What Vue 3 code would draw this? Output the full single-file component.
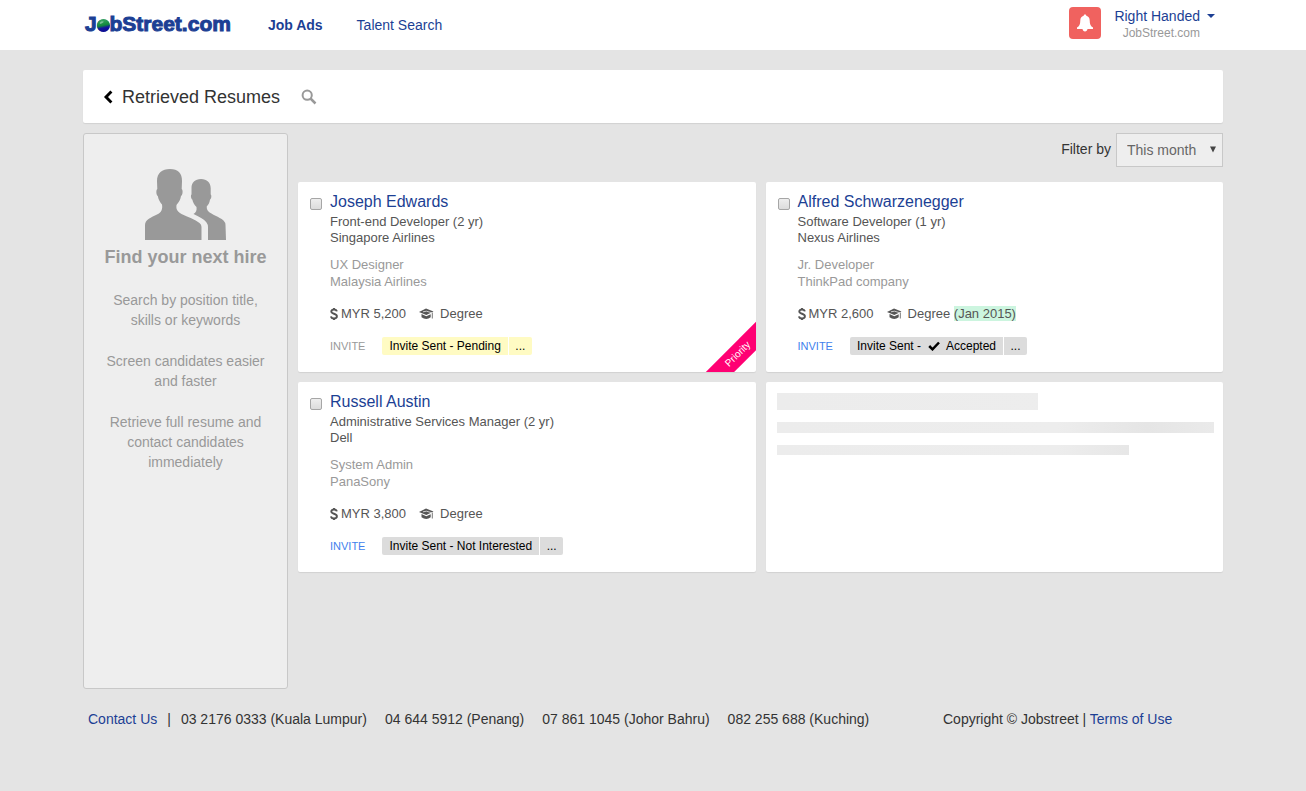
<script setup>
import { ref } from 'vue'

const period = ref('This month')

const candidates = ref([
  {
    id: 1, name: 'Joseph Edwards', role: 'Front-end Developer (2 yr)', company: 'Singapore Airlines',
    pastRole: 'UX Designer', pastCompany: 'Malaysia Airlines', salary: 'MYR 5,200', graduated: '',
    canInvite: false, prefix: 'Invite Sent - Pending', accepted: false, tone: 'pending', priority: true, checked: false
  },
  {
    id: 2, name: 'Alfred Schwarzenegger', role: 'Software Developer (1 yr)', company: 'Nexus Airlines',
    pastRole: 'Jr. Developer', pastCompany: 'ThinkPad company', salary: 'MYR 2,600', graduated: '(Jan 2015)',
    canInvite: true, prefix: 'Invite Sent -', accepted: true, tone: 'closed', priority: false, checked: false
  },
  {
    id: 3, name: 'Russell Austin', role: 'Administrative Services Manager (2 yr)', company: 'Dell',
    pastRole: 'System Admin', pastCompany: 'PanaSony', salary: 'MYR 3,800', graduated: '',
    canInvite: true, prefix: 'Invite Sent - Not Interested', accepted: false, tone: 'closed', priority: false, checked: false
  }
])

const phones = [
  '03 2176 0333 (Kuala Lumpur)',
  '04 644 5912 (Penang)',
  '07 861 1045 (Johor Bahru)',
  '082 255 688 (Kuching)'
]
</script>

<template>
  <div class="page">
    <header class="topbar">
      <div class="container topbar-inner">
        <a class="logo" href="#">J<span class="logo-o">o<svg class="globe" viewBox="0 0 14 14" aria-hidden="true">
          <defs>
            <linearGradient id="globeFill" x1="0.3" y1="0" x2="0.5" y2="1">
              <stop offset="0" stop-color="#3fa968" />
              <stop offset="0.5" stop-color="#128a3c" />
              <stop offset="0.7" stop-color="#1414a0" />
              <stop offset="1" stop-color="#0c0c90" />
            </linearGradient>
          </defs>
          <circle cx="7" cy="7" r="7" fill="url(#globeFill)" />
          <path d="M3 4 Q5 1.500 7.500 3 Q5.500 5 3.200 5.400Z" fill="#7cc198" />
        </svg></span>bStreet.com</a>
        <nav class="nav">
          <a class="nav-link active" href="#">Job Ads</a>
          <a class="nav-link" href="#">Talent Search</a>
        </nav>
        <div class="account">
          <button class="bell" type="button" aria-label="Notifications">
            <svg width="18" height="18" viewBox="0 0 18 18" aria-hidden="true">
              <path d="M9 .5c.8 0 1.300.5 1.300 1.300 2.400.6 3.400 2.400 3.400 4.600 0 4 1 5.600 3.300 7.100v1.500H1v-1.500c2.300-1.500 3.300-3.100 3.300-7.100 0-2.200 1-4 3.400-4.600C7.700 1 8.200.5 9 .5z" fill="#fff" />
              <path d="M6.500 15h5c-.2 1.400-1.200 2.400-2.500 2.400S6.700 16.400 6.500 15z" fill="#fff" />
            </svg>
          </button>
          <div class="who">
            <button class="user" type="button">Right Handed<span class="caret"></span></button>
            <span class="org">JobStreet.com</span>
          </div>
        </div>
      </div>
    </header>

    <main class="container">
      <div class="titlebar">
        <a class="back" href="#" aria-label="Back">
          <svg width="10" height="14" viewBox="0 0 10 14" aria-hidden="true">
            <path d="M8.400 1.500 3 7l5.400 5.500" fill="none" stroke="#000" stroke-width="2.900" />
          </svg>
        </a>
        <h1>Retrieved Resumes</h1>
        <button class="search" type="button" aria-label="Search">
          <svg width="16" height="16" viewBox="0 0 16 16" aria-hidden="true">
            <circle cx="6.200" cy="6.200" r="4.600" fill="none" stroke="#999" stroke-width="2" />
            <path d="M9.500 9.500 14.500 14.500" stroke="#999" stroke-width="2.500" />
          </svg>
        </button>
      </div>

      <div class="columns">
        <aside class="promo">
          <svg class="people" width="82" height="71" viewBox="0 0 82 71" aria-hidden="true">
            <path fill="#999" d="M25 0C17 0 12 4 12 12L12.300 20C11 20.500 11 26 12.800 27C13.500 31 15 33 17 35.500C17.800 40 16.500 43.500 12 45.500C8 47.500 3 49.500 1 52.500Q0 54 0 56V71H56.500V58Q56.500 55.500 54.500 54C50 50.500 43 48 36.500 45C32 42.500 31 40 31.500 36C34 33 35.500 30.500 36 27C38 26 38 20.500 36.700 20L37 12C37 4 33 0 25 0Z" />
            <path fill="#999" d="M56 10C50 10 46.500 13.500 46.500 19V25.500C45.500 26 46 30 47.300 30.500C48 34 49.500 36 51.500 38C52 41.500 51 43.500 48.500 45C54 48 59 50 61.500 53.500Q63 55.500 63 58V71H81L80.500 56Q80.500 53.500 78.500 51.500C74 47.500 67 46 63 42Q61.500 40 61.700 37.500C63.500 35.500 64.700 33.500 65 30.500C66.500 30 66.800 26 65.700 25.500V19C65.500 13.500 62 10 56 10Z" />
          </svg>
          <h2>Find your next hire</h2>
          <p>Search by position title, skills or keywords</p>
          <p>Screen candidates easier and faster</p>
          <p>Retrieve full resume and contact candidates immediately</p>
        </aside>

        <section class="results">
          <div class="filter">
            <label for="period">Filter by</label>
            <span class="select-wrap">
              <select id="period" v-model="period">
                <option>This month</option>
                <option>Last month</option>
              </select>
              <svg class="select-arrow" width="6" height="7" viewBox="0 0 6 7" aria-hidden="true">
                <path d="M0 0.500H6L3 6.500Z" fill="#444" />
              </svg>
            </span>
          </div>

          <div class="cards">
            <article v-for="c in candidates" :key="c.id" class="card">
              <input :id="'pick-' + c.id" v-model="c.checked" class="pick" type="checkbox" :aria-label="'Select ' + c.name" />
              <div class="info">
                <h3><a href="#">{{ c.name }}</a></h3>
                <p class="job">{{ c.role }}<br />{{ c.company }}</p>
                <p class="past">{{ c.pastRole }}<br />{{ c.pastCompany }}</p>
                <div class="facts">
                  <svg class="dollar" width="8" height="14" viewBox="0 0 8 14" aria-hidden="true">
                    <path d="M6.800 4.400C6.500 3.100 5.500 2.500 4 2.500 2.400 2.500 1.300 3.200 1.300 4.500 1.300 7.200 6.900 6.300 6.900 9.200 6.900 10.600 5.700 11.400 4 11.400 2.300 11.400 1.200 10.700 1 9.300M4 1V2.500M4 11.400V13" fill="none" stroke="#555" stroke-width="1.900" />
                  </svg>
                  <span class="salary">{{ c.salary }}</span>
                  <svg class="cap" width="15" height="12" viewBox="0 0 15 12" aria-hidden="true">
                    <path d="M0 4 7 .5 14.500 3.500 7.300 7Z" fill="#555" />
                    <path d="M2.500 6 7.300 8.300 11.700 6.200V9.300Q7.300 12.500 2.500 9.300Z" fill="#555" />
                    <path d="M4 3.800 7.500 3.200 13.200 4.900V10.500" fill="none" stroke="#fff" stroke-width=".7" />
                    <path d="M13.300 4.500V10.500" stroke="#777" stroke-width="1" />
                  </svg>
                  <span>Degree <mark v-if="c.graduated">{{ c.graduated }}</mark></span>
                </div>
                <div class="actions">
                  <button class="invite" type="button" :disabled="!c.canInvite">INVITE</button>
                  <span class="status" :class="c.tone">
                    <span class="status-text">{{ c.prefix }}<template v-if="c.accepted"><svg class="tick" width="12" height="10" viewBox="0 0 12 10" aria-hidden="true">
                      <path d="M1.200 5 4.500 8.300 11 1.500" fill="none" stroke="#000" stroke-width="2.500" />
                    </svg>Accepted</template></span>
                    <button class="more" type="button" :aria-label="'More about ' + c.name">...</button>
                  </span>
                </div>
              </div>
              <span v-if="c.priority" class="ribbon">Priority</span>
            </article>

            <div class="card loading" aria-busy="true">
              <div class="bar bar-title"></div>
              <div class="bar bar-full"></div>
              <div class="bar bar-part"></div>
            </div>
          </div>
        </section>
      </div>
    </main>

    <footer class="container footer">
      <div class="contacts">
        <a href="#">Contact Us</a>
        <span class="divider">|</span>
        <div class="phones">
          <span v-for="p in phones" :key="p">{{ p }}</span>
        </div>
      </div>
      <div class="legal">Copyright © Jobstreet | <a href="#">Terms of Use</a></div>
    </footer>
  </div>
</template>

<style>
body {
  margin: 0;
  background: #e4e4e4;
}
</style>

<style scoped>
* {
  box-sizing: border-box;
}
.page {
  min-height: 100vh;
  font-family: "Liberation Sans", Arial, sans-serif;
  font-size: 14px;
  line-height: 20px;
  color: #333;
  background: #e4e4e4;
}
h1, h2, h3, p {
  margin: 0;
  font-weight: normal;
}
a {
  color: #1c3f94;
  text-decoration: none;
}
button {
  padding: 0;
  border: 0;
  background: none;
  font: inherit;
  color: inherit;
  cursor: pointer;
}
svg {
  display: block;
  flex: none;
}
.container {
  width: calc(100% - 32px);
  max-width: 1140px;
  margin: 0 auto;
}
.topbar {
  background: #fff;
}
.topbar-inner {
  display: flex;
  align-items: center;
  height: 50px;
}
.logo {
  margin-left: 2px;
  padding-bottom: 2px;
  font-size: 21px;
  font-weight: bold;
  line-height: 24px;
  -webkit-text-stroke: 1px #1c3f94;
}
.logo-o {
  position: relative;
}
.globe {
  position: absolute;
  left: 0;
  bottom: 3px;
  width: 13px;
  height: 13px;
}
.nav {
  display: flex;
  gap: 34px;
  margin-left: 37px;
}
.nav-link.active {
  font-weight: bold;
}
.account {
  display: flex;
  gap: 13px;
  margin-left: auto;
  margin-right: 8px;
  padding-bottom: 2px;
}
.bell {
  display: flex;
  align-items: center;
  justify-content: center;
  width: 32px;
  height: 32px;
  border-radius: 4px;
  background: #f0625f;
}
.who {
  display: flex;
  flex-direction: column;
}
.user {
  display: flex;
  align-items: center;
  gap: 7px;
  line-height: 18px;
  color: #1c3f94;
}
.caret {
  border: 4px solid transparent;
  border-top-color: #1c3f94;
  border-bottom: 0;
}
.org {
  padding-right: 15px;
  font-size: 12px;
  line-height: 16px;
  text-align: right;
  color: #999;
}
.titlebar {
  display: flex;
  align-items: center;
  height: 53px;
  margin-top: 20px;
  padding-left: 20px;
  background: #fff;
  border-radius: 2px;
  box-shadow: 0 1px 1px rgba(0, 0, 0, 0.08);
}
.titlebar h1 {
  margin-left: 9px;
  font-size: 18px;
}
.search {
  margin-left: 21px;
}
.columns {
  display: flex;
  gap: 10px;
  margin-top: 10px;
}
.promo {
  flex: none;
  width: 205px;
  min-height: 556px;
  padding: 35px 15px;
  border: 1px solid #c8c8c8;
  border-radius: 3px;
  background: #eee;
  text-align: center;
  color: #999;
}
.people {
  margin: 0 auto;
}
.promo h2 {
  margin: 6px 0 22px;
  font-size: 18px;
  font-weight: bold;
  line-height: 22px;
}
.promo p {
  margin-bottom: 21px;
}
.results {
  flex: 1;
  min-width: 0;
}
.filter {
  display: flex;
  align-items: center;
  justify-content: flex-end;
  gap: 5px;
  margin-bottom: 15px;
}
.filter label {
  padding-bottom: 2px;
}
.select-wrap {
  position: relative;
}
.select-wrap select {
  display: block;
  appearance: none;
  width: 107px;
  height: 34px;
  padding: 0 20px 0 10px;
  border: 1px solid #c8c8c8;
  border-radius: 0;
  background: #eee;
  font: inherit;
  color: #666;
}
.select-arrow {
  position: absolute;
  right: 7px;
  top: 13px;
  pointer-events: none;
}
.cards {
  display: grid;
  grid-template-columns: repeat(2, minmax(0, 1fr));
  gap: 10px;
}
.card {
  position: relative;
  display: flex;
  gap: 8px;
  min-height: 190px;
  padding: 10px 12px;
  overflow: hidden;
  border-radius: 2px;
  background: #fff;
  box-shadow: 0 1px 1px rgba(0, 0, 0, 0.08);
  font-size: 13px;
  color: #555;
}
.pick {
  appearance: none;
  flex: none;
  width: 12px;
  height: 12px;
  margin: 6px 0 0;
  border: 1px solid #a6a6a6;
  border-radius: 2px;
  background: linear-gradient(#eee, #dcdcdc);
}
.pick:checked {
  background: #1c3f94;
}
.info h3 {
  font-size: 16px;
  line-height: 20px;
}
.job {
  margin-top: 2px;
  line-height: 16px;
}
.past {
  margin-top: 10px;
  line-height: 17px;
  color: #999;
}
.facts {
  display: flex;
  align-items: center;
  margin-top: 14px;
  line-height: 20px;
}
.salary {
  margin: 0 13px 0 3px;
}
.cap {
  margin-right: 6px;
}
mark {
  background: #ccf5df;
  color: inherit;
}
.actions {
  display: flex;
  align-items: center;
  gap: 17px;
  margin-top: 13px;
}
.invite {
  font-size: 11px;
  line-height: 18px;
  color: #427fed;
}
.invite:disabled {
  color: #999;
  cursor: default;
}
.status {
  display: flex;
  gap: 1px;
  font-size: 12px;
  line-height: 18px;
  color: #000;
}
.status-text {
  display: flex;
  align-items: center;
  padding: 0 7px;
  border-radius: 2px 0 0 2px;
}
.tick {
  margin: 0 6px 0 7px;
}
.more {
  width: 23px;
  border-radius: 0 2px 2px 0;
}
.pending > * {
  background: #fffbc3;
}
.closed > * {
  background: #dcdcdc;
}
.ribbon {
  position: absolute;
  right: -22px;
  bottom: 8px;
  width: 80px;
  background: #ff0073;
  font-size: 10px;
  line-height: 20px;
  text-align: center;
  color: #fff;
  transform: rotate(-45deg);
}
.loading {
  display: block;
  padding: 11px;
}
.bar {
  height: 11px;
  margin-bottom: 12px;
  background: linear-gradient(90deg, #ececec 0, #ededed 280px, #e5e5e5 370px, #eaeaea 437px);
}
.bar-title {
  width: 60%;
  height: 17px;
}
.bar-full {
  width: calc(100% + 2px);
}
.bar-part {
  width: 81%;
  height: 10px;
}
.footer {
  display: flex;
  margin-top: 20px;
  padding: 0 5px;
}
.contacts {
  display: flex;
  flex: 1;
}
.divider {
  margin: 0 10px;
}
.phones {
  display: flex;
  gap: 18px;
}
.legal {
  width: 275px;
}
</style>
